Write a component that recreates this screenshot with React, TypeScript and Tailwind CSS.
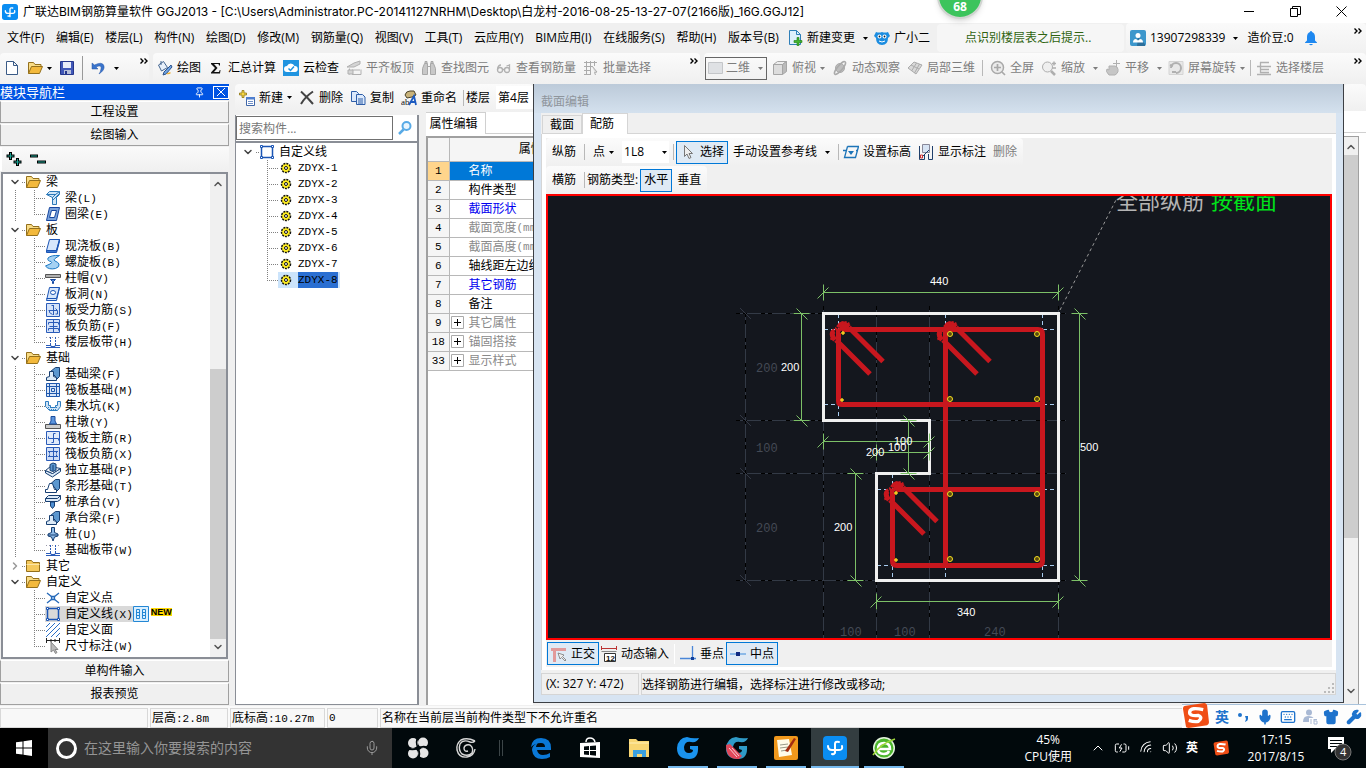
import React from 'react';

import { BatteryCharging, ChevronDown, ChevronRight, ChevronUp, Keyboard, Mic, Pin, Shirt, Volume2, Wifi, Wrench } from 'lucide-react';
import clsx from 'clsx';

const mono = "font-['Liberation_Mono','Noto_Sans_CJK_SC',monospace] text-[11px]";

type IconName =
  | 'beam' | 'ring' | 'slab' | 'spiral' | 'cap' | 'hole' | 'rebar' | 'negRebar' | 'strip'
  | 'wedge' | 'raft' | 'pit' | 'pier' | 'mainBar' | 'rebarX' | 'isolated' | 'stripBase' | 'pileCap'
  | 'pile' | 'point' | 'line' | 'hatch' | 'measure' | 'folder' | 'folderClosed' | 'gear'
  | 'page' | 'save' | 'undo' | 'paint' | 'sigma' | 'cloud' | 'align' | 'find' | 'glasses' | 'batch'
  | 'rect' | 'cube' | 'orbit' | 'part' | 'full' | 'zoomer' | 'pan' | 'rotate' | 'floors'
  | 'pageNew' | 'owl' | 'user' | 'bell' | 'add' | 'remove' | 'copy' | 'rename' | 'search'
  | 'cursor' | 'level' | 'labels' | 'ortho' | 'dynamic' | 'perp' | 'mid' | 'columns';

const icons: Record<IconName, React.ReactNode> = {
  beam: (
    <g fill="#cfe6f8" stroke="#2b78b8">
      <path d="M1.500 4.500l3-3h10v3l-3 3v7h-4v-7z" />
      <path d="M1.500 4.500h9l4-3M7 8l4-4M7 11l7-7" />
    </g>
  ),
  ring: (
    <g fill="#7aa3dc" stroke="#17469e">
      <path d="M4.500 1.500h10l-3 13h-10z" />
      <path d="M6.500 4.500h5l-2 7h-5z" fill="#fff" />
    </g>
  ),
  slab: (
    <g stroke="#1b54b4">
      <path d="M4.500 1.500h10l-3 11h-10z" fill="#d6e6fb" />
      <path d="M1.500 12.500v2h10l3-11v-2l-3 11z" fill="#3c78cf" />
    </g>
  ),
  spiral: <path d="M14.500 1.500Q6 1 3 4q-1 3 3 3.500 2 1-1 2.500l-4.500 2q3 4 10 2.500Q15 13 14 10q-1-2-4-3-2-1 0-2.500z" fill="#a5d2f3" stroke="#1b78c4" />,
  cap: (
    <g>
      <path d="M.5 4.500h15v3H.5z" fill="#b0b0b0" stroke="#555" />
      <path d="M5.500 9.500h5l-2 2v2h-1v-2z" fill="#4f8be0" stroke="#1748a0" />
    </g>
  ),
  hole: (
    <g stroke="#1b54b4">
      <path d="M4.500 1.500h10l-3 13h-10z" fill="#d6e6fb" />
      <path d="M1.500 12.500h10l3-11" fill="none" />
      <ellipse cx="8" cy="6.500" rx="2.500" ry="2" fill="#fff" />
    </g>
  ),
  rebar: (
    <g fill="none" stroke="#2b5cb8">
      <path d="M1.500 1.500h13v13h-13z" fill="#d5e3f9" />
      <path d="M8.500 3v10M6.500 3.500h2M3.500 8.500h9l-2-2M4.500 8.500v2l3 2M12.500 9v3h-2" />
    </g>
  ),
  negRebar: (
    <g fill="none" stroke="#2b5cb8">
      <path d="M1.500 1.500h13v13h-13z" fill="#d5e3f9" />
      <path d="M8.500 2v12M3.500 6.500v-2h10v2M4.500 8.500h8M3.500 12.500v-2h10v2" />
    </g>
  ),
  strip: (
    <g stroke="#2b5cb8" fill="none">
      <path d="M1 3.500h14" stroke="#99a" strokeDasharray="1 2" />
      <path d="M5.500 3v8M10.500 3v8" strokeDasharray="2 1" />
      <path d="M1 11.500h5v1h4v-1h5M1 13.500h14" />
    </g>
  ),
  wedge: (
    <g stroke="#173f72">
      <path d="M5.500 5.500l5-4h4v9l-4 4v-4z" fill="#5b97cf" />
      <path d="M1.500 14.500v-3l3-1v-5h4v5l3 1v3z" fill="#dceaf7" />
    </g>
  ),
  raft: (
    <g fill="none" stroke="#1f58ad">
      <path d="M1.500 1.500h13v13h-13z" fill="#d9e6f8" />
      <path d="M4.500 1v14M11.500 1v14M1 4.500h14M1 11.500h14M6.500 6.500h3v3h-3z" />
    </g>
  ),
  pit: (
    <g stroke="#2f7dc0">
      <path d="M.5 3.500h3v4h2v2h5v-2h2v-4h3v5l-3 4h-8l-4-4z" fill="#cfe3f5" />
      <path d="M3 9.500h10M4 11.500h8" strokeDasharray="1 1" />
    </g>
  ),
  pier: (
    <g>
      <path d="M.5 10.500h15v4H.5z" fill="#ccc" stroke="#555" />
      <path d="M4.500 10l1.500-3V2.500h4V7l1.500 3z" fill="#5c95dd" stroke="#1b4d9c" />
    </g>
  ),
  mainBar: (
    <g fill="none" stroke="#2b5cb8">
      <path d="M1.500 1.500h13v13h-13z" fill="#e2ecfb" />
      <path d="M10.500 3.500h-2v9h-2M3.500 6.500v2h10v2" />
    </g>
  ),
  rebarX: (
    <g fill="none" stroke="#2b5cb8">
      <path d="M1.500 1.500h13v13h-13z" fill="#cfdef7" />
      <path d="M8.500 2v12M3 5.500h10M4.500 5.500v2M11.500 5.500v2M3 10.500h10M4.500 8.500v2M11.500 8.500v2" />
    </g>
  ),
  isolated: (
    <g stroke="#173f72">
      <path d="M.5 8.500l7 3 8-5v3l-8 5.500-7-4z" fill="#d9e8f7" />
      <path d="M.5 8.500l5-4 10 2-8 5z" fill="#fff" />
      <path d="M5 2.500l3-1.500 3 1v6l-3 1.500-3-1z" fill="#5b97cf" />
      <path d="M8 3v6" />
    </g>
  ),
  stripBase: (
    <g stroke="#173f72">
      <path d="M6 5.500l4.500-4h4v9l-4 4v-4z" fill="#5b97cf" />
      <path d="M.5 14.500v-3h2l2-6h3l2 6h2v3z" fill="#fff" />
    </g>
  ),
  pileCap: (
    <g stroke="#173f72">
      <path d="M.5 4.500l3-3h12v4l-3 2H.5z" fill="#dceaf8" />
      <path d="M.5 4.500h12l3-3" fill="none" />
      <path d="M5.500 8h4v4l-2 2.500-2-2.500z" fill="#4e90d4" />
    </g>
  ),
  pile: (
    <g stroke="#173f72">
      <path d="M6.500 1.500h3v5l3.500 1.500v2l-3.500 1-1.500 4-1.500-4-3.500-1V8l3.500-1.500z" fill="#8db9e6" />
      <path d="M3 9h10" />
    </g>
  ),
  point: (
    <g stroke="#2468b8" strokeWidth="1.300" fill="none">
      <path d="M2 3l5 4M14 3L9 7M2 13l5-4M14 13L9 9" />
      <path d="M6.500 6.500h3v3h-3z" fill="#bcd8f4" />
    </g>
  ),
  line: (
    <g stroke="#1b55b5" fill="#fff">
      <path d="M2.500 2.500h11v11h-11z" fill="none" strokeWidth="1.500" />
      <path d="M1.500 1.500h2v2h-2zM12.500 1.500h2v2h-2zM1.500 12.500h2v2h-2zM12.500 12.500h2v2h-2z" />
    </g>
  ),
  hatch: <path d="M1 5l4-4M1 10l9-9M1 15L15 1M6 15l9-9M11 15l4-4" stroke="#2a6fc6" />,
  measure: (
    <g>
      <path d="M1.500 0v5M14.500 0v5M1.500 2.500h13M6 1v3M10 1v3" stroke="#222" fill="none" />
      <path d="M6 4v10l2.500-2 2 3.500 1.500-1-2-3h3z" fill="#bbb" stroke="#888" />
    </g>
  ),
  folder: (
    <g stroke="#94701c">
      <path d="M1.500 13.500v-11h5l1.500 2h6v3" fill="#f9dc86" />
      <path d="M1.500 13.500l3-7h11l-3 7z" fill="#f3b93c" />
    </g>
  ),
  folderClosed: (
    <g stroke="#94701c">
      <path d="M1.500 13.500v-11h5l1.500 2h6.500v9z" fill="#f5c95c" />
      <path d="M1.500 6.500h13" stroke="#fbe5a5" />
    </g>
  ),
  gear: (
    <g>
      <circle cx="8" cy="8" r="4.500" fill="#ffee22" stroke="#111" strokeWidth="1.500" strokeDasharray="2 1" />
      <circle cx="8" cy="8" r="1.500" fill="#fff" stroke="#111" />
    </g>
  ),
  page: <path d="M2.500 1.500h7l4 4v9h-11zM9.500 1.500v4h4" fill="#fff" stroke="#3a5a86" />,
  save: (
    <g>
      <path d="M1.500 1.500h13v13h-13z" fill="#4158b8" stroke="#26378c" />
      <path d="M4 2h8v6H4z" fill="#e8ecf8" />
      <path d="M5 10h7v4H5z" fill="#b9c1da" />
      <path d="M6 11h2v3H6z" fill="#26378c" />
    </g>
  ),
  undo: <path d="M2 3v6h6L6 7q6-3 5 2-.5 3-2 5 6-4 5-8-1.500-5-9.500-1z" fill="#3a74cc" stroke="#2757a6" strokeWidth=".5" />,
  paint: (
    <g>
      <path d="M1.500 5l5-3.500 4 6-6 3.500z" fill="#e8f0fa" stroke="#43648f" />
      <path d="M4 1v4" stroke="#43648f" />
      <path d="M14 5l-7 7-1 3 3-1 6-7z" fill="#6fa4e4" stroke="#2f548c" />
      <path d="M9 14q4-3 5-1-2 2-5 1z" fill="#f0b030" />
    </g>
  ),
  sigma: <path d="M3 3h9v2.500h-1L10.500 4H6l3.500 4L6 12h5l.8-2h.7L12 13.500H3v-1L7 8 3 4z" fill="#111" />,
  cloud: (
    <g>
      <path d="M0 0h16v16H0z" fill="#2094e0" />
      <path d="M4 12a3 3 0 0 1 0-6 4 4 0 0 1 7.500 0A3 3 0 0 1 12 12z" fill="#fff" />
      <path d="M5.500 8.500l2 2 3.500-4" fill="none" stroke="#2094e0" strokeWidth="1.500" />
    </g>
  ),
  align: (
    <g fill="#d4d4d4" stroke="#b0b0b0">
      <path d="M1 7l7-4 6-2v3l-6 3z" />
      <path d="M3.500 8.500v6M6 10h8M6 14.500h9v-5" fill="none" />
      <path d="M2 10h5v4H2z" />
    </g>
  ),
  find: (
    <g fill="#c8c8c8" stroke="#a8a8a8">
      <path d="M1.500 14.500v-6l2-5h3v11zM9.500 14.500v-11h3l2 5v6z" />
      <path d="M6.500 6.500h3M4 1.500h2v2H4zM10 1.500h2v2h-2z" />
    </g>
  ),
  glasses: (
    <g fill="none" stroke="#b0b0b0" strokeWidth="1.300">
      <circle cx="4" cy="10" r="2.500" />
      <circle cx="11" cy="10" r="2.500" />
      <path d="M6.500 9.500h2M1.500 9.500Q2 5 5 5M13.500 10V5l-3 1" />
    </g>
  ),
  batch: (
    <g stroke="#ababab" fill="none">
      <path d="M1 2.500h13M3.500 1v13M1 6.500h8M7.500 1v13M1 10.500h7M11.500 1v5M1 14.500h7" />
      <path d="M9 6l5 6-2.500.5 1 2.500" fill="#ddd" />
    </g>
  ),
  rect: <path d="M.5 2.500h14v11H.5z" fill="#dfe1e4" stroke="#c4c6c9" />,
  cube: (
    <g stroke="#a6a6a6">
      <path d="M1.500 4.500h9v10h-9z" fill="#ddd" />
      <path d="M1.500 4.500l4-3h9l-4 3z" fill="#eee" />
      <path d="M10.500 4.500l4-3v10l-4 3z" fill="#bbb" />
    </g>
  ),
  orbit: (
    <g stroke="#aaa">
      <circle cx="8" cy="8" r="4.500" fill="#bdbdbd" />
      <ellipse cx="8" cy="8" rx="8" ry="2.500" transform="rotate(-50 8 8)" fill="none" strokeWidth="1.500" />
    </g>
  ),
  part: (
    <g fill="#d8d8d8" stroke="#ababab">
      <path d="M1 8l6-6 8 3-6 9z" />
      <path d="M4 5l8 4M9.500 3l-5 8M12.500 4l-5 9" fill="none" />
    </g>
  ),
  full: (
    <g fill="none" stroke="#a8a8a8">
      <circle cx="7.500" cy="7.500" r="6" fill="#ebebeb" strokeWidth="1.500" />
      <path d="M4 7.500h7M7.500 4v7M12 12l3 3" strokeWidth="1.700" />
    </g>
  ),
  zoomer: (
    <g fill="none" stroke="#aeaeae">
      <circle cx="6.500" cy="7" r="5" fill="#efefef" />
      <path d="M10 11l4 4" strokeWidth="2.500" />
      <path d="M11 3.500h4M13 1.500v4M11 8h4" strokeWidth="1.500" />
    </g>
  ),
  pan: (
    <g fill="#c6c6c6" stroke="#b0b0b0">
      <path d="M4 15q-4-4-2-6l2 1V6h6l2 1q3 5-2 8z" />
      <path d="M8 3.500h7M11.500 0v7" />
    </g>
  ),
  rotate: (
    <g fill="none" stroke="#b0b0b0">
      <path d="M1 1.500h14v13H1z" fill="#e8e8e8" stroke="#d4d4d4" />
      <path d="M3 8a5 5 0 1 1 5 5" strokeWidth="2" />
      <path d="M4 12h4M2 5l3 1" strokeWidth="2" />
    </g>
  ),
  floors: <path d="M4 2.500h9M1 6.500h14M4 9.500h9M4 12.500h9M1 14.500h14M4.500 2v11" fill="none" stroke="#b0b0b0" strokeWidth="1.300" />,
  pageNew: (
    <g>
      <path d="M2.500.5h7l4 4v10h-11z" fill="#dff0fc" stroke="#2f7fb8" />
      <path d="M9.500.5v4h4" fill="none" stroke="#2f7fb8" />
      <path d="M10 7.500h2v3h3v2h-3v3h-2v-3H7v-2h3z" fill="#43b52e" stroke="#1d7a12" strokeWidth=".6" />
    </g>
  ),
  owl: (
    <g>
      <path d="M2 2q3 1 6 0 3 1 6 0l2 4-2 2q0 7-6 7T2 8L0 6z" fill="#1c8de0" />
      <circle cx="5.500" cy="6.500" r="2" fill="#fff" />
      <circle cx="10.500" cy="6.500" r="2" fill="#fff" />
      <circle cx="5.500" cy="6.500" r=".9" fill="#123" />
      <circle cx="10.500" cy="6.500" r=".9" fill="#123" />
      <path d="M5 11q3 2 6 0" stroke="#fff" fill="none" />
    </g>
  ),
  user: (
    <g>
      <rect width="16" height="16" rx="2" fill="#3d97cc" />
      <path d="M8 7l7 7v2H7z" fill="#2b6f9c" />
      <circle cx="8" cy="5.500" r="2.500" fill="#fff" />
      <path d="M3 12.500q0-3.500 3-3.500l2 1.500L10 9q3 0 3 3.500z" fill="#fff" />
    </g>
  ),
  bell: <path d="M8 1q1 0 1 1 3 1 3 5v3.500l2 2v.5H2v-.5l2-2V7q0-4 3-5 0-1 1-1zM6 14h4q-2 2.500-4 0z" fill="#1e88f0" />,
  add: (
    <g>
      <path d="M3 .5h2V3h2.500v2H5v2.500H3V5H.5V3H3z" fill="#f4d64a" stroke="#8d7310" strokeWidth=".8" />
      <path d="M7.500 7.500h8v8h-8z" fill="#fff" stroke="#3f66a8" />
      <path d="M7 7h9v2.500H7z" fill="#4f7fd0" />
      <path d="M9 11.500h5M9 13.500h5" stroke="#6f8fc8" />
    </g>
  ),
  remove: <path d="M2 1.500Q8 7 14 14M14 1.500Q6 7 2 14" fill="none" stroke="#444" strokeWidth="2" />,
  copy: (
    <g fill="#dce9fb" stroke="#2f5ea8">
      <path d="M1.500 1.500h5l2 2v8h-7z" />
      <path d="M6.500 4.500h6l2.500 2.500v7.500H6.500z" />
      <path d="M8 9h5M8 11h5M8 13h5" />
    </g>
  ),
  rename: (
    <g>
      <path d="M4 5q1-4 5-4h4l2 4-4 2-5 1z" fill="#c9b37a" stroke="#4b4229" />
      <text x="0" y="15" fontSize="9" fontFamily="Liberation Serif" fill="#111">ab</text>
      <path d="M8 15l5-9 2 9M10 12h5" fill="none" stroke="#1d5bc0" strokeWidth="1.800" />
    </g>
  ),
  search: (
    <g fill="none" stroke="#58aae6">
      <circle cx="9.500" cy="6" r="4" strokeWidth="2" fill="#eaf5fd" />
      <path d="M6.500 9.500L2 14" strokeWidth="2.500" />
    </g>
  ),
  cursor: <path d="M4.500 1.500v11l2.500-2.500 2 4.500 2-1-2-4h3.500z" fill="#eee" stroke="#777" />,
  level: (
    <g fill="none" stroke="#1c74b8" strokeWidth="1.300">
      <path d="M4.500 2.500h11l-3 11h-11l3-11M0 6.500h4M13 6.500h2" />
      <path d="M5 7h6l-3 4z" fill="#1c74b8" stroke="none" />
    </g>
  ),
  labels: (
    <g fill="none" stroke="#1f3f6b">
      <path d="M1.500 2v13.500h5V10M10.500 10v5.500h4V2" />
      <path d="M4.500.5h7v8h-7z" fill="#d7e4f4" stroke="#889" />
      <path d="M5 12l6-6" />
      <path d="M2.500 11h2v3h-2z" stroke="#c33" />
    </g>
  ),
  ortho: (
    <g>
      <path d="M0 2h15v3H5v11H2V5H0z" fill="#e29a9a" />
      <path d="M7 7l2 6 1.500-1.500L14 15l1-1-3.500-3.500L13 9z" fill="#eee" stroke="#777" strokeWidth=".8" />
    </g>
  ),
  dynamic: (
    <g>
      <path d="M.5 0v4M15.500 0v4M0 2.500h16" stroke="#b33" fill="none" />
      <path d="M3.500 7.500h11v8h-11z" fill="#fff" stroke="#333" />
      <text x="5" y="14.500" fontSize="8" fontWeight="bold" fontFamily="Liberation Sans" fill="#111">12</text>
      <path d="M.5 5.500h15" stroke="#888" />
    </g>
  ),
  perp: (
    <g>
      <path d="M12.500 0v12M0 12.500h16" stroke="#4a86d8" strokeWidth="1.300" />
      <path d="M11 11h3v3h-3z" fill="#123f9a" />
    </g>
  ),
  mid: (
    <g>
      <path d="M0 8h16" stroke="#5f9fe0" strokeWidth="1.300" />
      <path d="M6 6h4v4H6z" fill="#102a80" />
    </g>
  ),
  columns: <path d="M.5.5h15v15H.5zM3.500 3.500h3v9h-3zM9.500 3.500h3v9h-3zM3.500 6.500h3M3.500 9.500h3M9.500 6.500h3M9.500 9.500h3" fill="#d9efff" stroke="#2487d4" />,
};

const Icon: React.FC<{ name: IconName; className?: string }> = ({ name, className }) => (
  <svg viewBox="0 0 16 16" fill="none" className={clsx('size-4 shrink-0', className)} aria-hidden="true">
    {icons[name]}
  </svg>
);

const Caret: React.FC<{ className?: string }> = ({ className }) => (
  <svg viewBox="0 0 5 3" className={clsx('h-[3px] w-[5px] shrink-0', className)} aria-hidden="true">
    <path d="M0 0h5L2.500 3z" fill="currentColor" />
  </svg>
);

const Divider: React.FC = () => <span className="h-4 w-px shrink-0 bg-[#b8b8b8]" />;

interface ToolProps {
  icon?: IconName;
  label?: string;
  caret?: boolean;
  tight?: boolean;
  disabled?: boolean;
  active?: boolean;
  title?: string;
}

const Tool: React.FC<ToolProps> = ({ icon, label, caret, tight, disabled, active, title }) => (
  <button
    type="button"
    disabled={disabled}
    title={title}
    aria-label={label ?? title}
    className={clsx(
      'flex shrink-0 items-center gap-1 whitespace-nowrap',
      disabled && 'text-[#7d7d7d]',
      active && 'h-[23px] border border-[#0078d7] bg-[#dfeaf5] px-[3px]',
    )}
  >
    {icon && <Icon name={icon} />}
    {label}
    {caret && <Caret className={tight ? '' : 'ml-1'} />}
  </button>
);

const More: React.FC<{ className?: string }> = ({ className }) => (
  <button type="button" aria-label="更多" className={clsx('shrink-0 self-start pt-[5px]', className)}>
    <svg viewBox="0 0 8 6" className="h-[6px] w-2">
      <path d="M.5.5L3 3 .5 5.500M4.500.5L7 3 4.500 5.500" fill="none" stroke="#000" strokeWidth="1.400" />
    </svg>
  </button>
);

const AppLogo: React.FC<{ className?: string }> = ({ className }) => (
  <svg viewBox="0 0 24 24" className={className} aria-hidden="true">
    <rect width="24" height="24" rx="4" fill="#0a8df2" />
    <path d="M12 19V8q0-3 4-2M5 10q0 4 4 4h7q4 0 3-4M9 18q3 1 3-3" fill="none" stroke="#fff" strokeWidth="2" strokeLinecap="round" />
  </svg>
);

const TitleBar: React.FC = () => (
  <header className="flex h-[23px] shrink-0 items-center bg-white pl-[2px]">
    <AppLogo className="mr-[5px] size-4" />
    <h1 className="flex-1 font-['Inter','Noto_Sans_CJK_SC',sans-serif] whitespace-nowrap">
      广联达BIM钢筋算量软件 GGJ2013 - [C:\Users\Administrator.PC-20141127NRHM\Desktop\白龙村-2016-08-25-13-27-07(2166版)_16G.GGJ12]
    </h1>
    <div className="flex gap-[35px] pr-[19px]">
      <button type="button" aria-label="最小化">
        <svg viewBox="0 0 11 11" className="size-[11px]"><path d="M0 5.500h10" stroke="#000" /></svg>
      </button>
      <button type="button" aria-label="还原">
        <svg viewBox="0 0 11 11" className="size-[11px]"><path d="M.5 2.500h7v8h-7zM2.500 2.500v-2h8v8h-2.500" fill="none" stroke="#000" /></svg>
      </button>
      <button type="button" aria-label="关闭">
        <svg viewBox="0 0 11 11" className="size-[11px]"><path d="M.5.5l10 10M10.500.5l-10 10" stroke="#000" /></svg>
      </button>
    </div>
  </header>
);

const menus = ['文件(F)', '编辑(E)', '楼层(L)', '构件(N)', '绘图(D)', '修改(M)', '钢筋量(Q)', '视图(V)', '工具(T)', '云应用(Y)', 'BIM应用(I)', '在线服务(S)', '帮助(H)', '版本号(B)'];

const MenuBar: React.FC = () => (
  <nav className="flex h-[30px] shrink-0 items-center pl-[7px]">
    <div className="mr-2 flex w-[772px] shrink-0 items-center justify-between">
      {menus.map((m) => (
        <button key={m} type="button" className="whitespace-nowrap">{m}</button>
      ))}
    </div>
    <div className="flex w-[150px] shrink-0 items-center gap-[6px]">
      <Tool icon="pageNew" label="新建变更" caret />
      <Tool icon="owl" label="广小二" />
    </div>
    <a href="#tip" className="flex h-7 w-[187px] shrink-0 items-center rounded bg-[#f6f6f6] pl-7 text-[#2f6410]">点识别楼层表之后提示..</a>
    <div className="ml-[2px] flex h-full flex-1 items-center gap-[9px] rounded bg-linear-to-b from-[#fafafa] to-[#f1f1f1] pl-1">
      <Tool icon="user" label="13907298339" caret />
      <span>造价豆:0</span>
      <Tool icon="bell" title="消息" />
      <More className="mr-1 ml-auto" />
    </div>
  </nav>
);

const bar = 'flex items-center rounded bg-linear-to-b from-[#fbfbfb] to-[#f0f0f0]';

const MainToolbar: React.FC = () => (
  <div className="flex h-[31px] shrink-0 gap-1 pb-px">
    <div className={clsx(bar, 'w-[149px] shrink-0 gap-[7px] pl-1')}>
      <Tool icon="page" title="新建" />
      <Tool icon="folder" caret tight title="打开" />
      <Tool icon="save" title="保存" />
      <span className="h-6 w-px bg-[#999]" />
      <Tool icon="undo" caret title="撤销" />
      <More className="mr-px ml-auto" />
    </div>
    <div className={clsx(bar, 'w-[547px] shrink-0 gap-[7px] pl-1')}>
      <Tool icon="paint" label="绘图" />
      <Tool icon="sigma" label="汇总计算" />
      <Tool icon="cloud" label="云检查" />
      <Tool icon="align" label="平齐板顶" disabled />
      <Tool icon="find" label="查找图元" disabled />
      <Tool icon="glasses" label="查看钢筋量" disabled />
      <Tool icon="batch" label="批量选择" disabled />
      <More className="mr-[2px] ml-auto" />
    </div>
    <div className={clsx(bar, 'flex-1 gap-[7px] pl-px')}>
      <label className="-mr-[2px] flex h-[23px] w-[62px] shrink-0 items-center border border-[#666] pl-[2px] text-[#7d7d7d]">
        <Icon name="rect" className="mr-[2px]" />
        <select aria-label="视图模式" className="w-8 appearance-none outline-none">
          <option>二维</option>
        </select>
        <Caret />
      </label>
      <Tool icon="cube" label="俯视" caret tight disabled />
      <Tool icon="orbit" label="动态观察" disabled />
      <Tool icon="part" label="局部三维" disabled />
      <Divider />
      <Tool icon="full" label="全屏" disabled />
      <Tool icon="zoomer" label="缩放" caret disabled />
      <Tool icon="pan" label="平移" caret disabled />
      <div className="-ml-px flex items-center gap-[5px]">
        <Tool icon="rotate" label="屏幕旋转" caret tight disabled />
        <Divider />
        <Tool icon="floors" label="选择楼层" disabled />
      </div>
      <More className="mr-1 ml-auto" />
    </div>
  </div>
);

interface TreeItem {
  label: string;
  hotkey?: string;
  icon: IconName;
}

interface TreeGroup {
  label: string;
  open: boolean;
  items: TreeItem[];
}

const groups: TreeGroup[] = [
  { label: '梁', open: true, items: [{ label: '梁', hotkey: '(L)', icon: 'beam' }, { label: '圈梁', hotkey: '(E)', icon: 'ring' }] },
  {
    label: '板',
    open: true,
    items: [
      { label: '现浇板', hotkey: '(B)', icon: 'slab' },
      { label: '螺旋板', hotkey: '(B)', icon: 'spiral' },
      { label: '柱帽', hotkey: '(V)', icon: 'cap' },
      { label: '板洞', hotkey: '(N)', icon: 'hole' },
      { label: '板受力筋', hotkey: '(S)', icon: 'rebar' },
      { label: '板负筋', hotkey: '(F)', icon: 'negRebar' },
      { label: '楼层板带', hotkey: '(H)', icon: 'strip' },
    ],
  },
  {
    label: '基础',
    open: true,
    items: [
      { label: '基础梁', hotkey: '(F)', icon: 'wedge' },
      { label: '筏板基础', hotkey: '(M)', icon: 'raft' },
      { label: '集水坑', hotkey: '(K)', icon: 'pit' },
      { label: '柱墩', hotkey: '(Y)', icon: 'pier' },
      { label: '筏板主筋', hotkey: '(R)', icon: 'mainBar' },
      { label: '筏板负筋', hotkey: '(X)', icon: 'rebarX' },
      { label: '独立基础', hotkey: '(P)', icon: 'isolated' },
      { label: '条形基础', hotkey: '(T)', icon: 'stripBase' },
      { label: '桩承台', hotkey: '(V)', icon: 'pileCap' },
      { label: '承台梁', hotkey: '(F)', icon: 'wedge' },
      { label: '桩', hotkey: '(U)', icon: 'pile' },
      { label: '基础板带', hotkey: '(W)', icon: 'strip' },
    ],
  },
  { label: '其它', open: false, items: [] },
  {
    label: '自定义',
    open: true,
    items: [
      { label: '自定义点', icon: 'point' },
      { label: '自定义线', hotkey: '(X)', icon: 'line' },
      { label: '自定义面', icon: 'hatch' },
      { label: '尺寸标注', hotkey: '(W)', icon: 'measure' },
    ],
  },
];

const SectionButton: React.FC<{ label: string }> = ({ label }) => (
  <button type="button" className="h-[22px] w-full shrink-0 border border-[#a0a0a0] border-t-white bg-[#f0f0f0] text-center leading-5">
    {label}
  </button>
);

const Guides: React.FC<{ outer?: boolean; last: boolean }> = ({ outer, last }) => (
  <svg viewBox="0 0 42 16" className="h-4 w-[42px] shrink-0" aria-hidden="true">
    <g stroke="#808080" strokeDasharray="1 1" fill="none">
      {outer && <path d="M12.500 0v16" />}
      <path d={last ? 'M31.500 0v8' : 'M31.500 0v16'} />
      <path d="M31 8.500h11" />
    </g>
  </svg>
);

const Navigator: React.FC = () => (
  <aside className="flex w-[229px] shrink-0 flex-col gap-px pb-px">
    <div className="flex h-4 shrink-0 items-center bg-[#0054e3] text-[13px] leading-4 text-white">
      <h2 className="flex-1">模块导航栏</h2>
      <Pin className="mr-2 size-[11px]" />
      <button type="button" aria-label="关闭导航栏" className="flex h-[13px] w-4 items-center justify-center border border-white">
        <svg viewBox="0 0 8 8" className="size-2"><path d="M0 0l8 8M8 0L0 8" stroke="#fff" /></svg>
      </button>
    </div>
    <SectionButton label="工程设置" />
    <SectionButton label="绘图输入" />
    <div className="flex h-6 shrink-0 items-center gap-2 border-l-2 border-white bg-linear-to-b from-[#fafafa] to-[#f0f0f0] pl-1">
      <button type="button" aria-label="全部展开">
        <svg viewBox="0 0 16 16" className="size-4">
          <path d="M4.500 1v8M.5 5h8M11.500 7v8M7.500 11h8" stroke="#000" strokeWidth="3" />
          <path d="M4.500 2v6M1.500 5h6M11.500 8v6M8.500 11h6" stroke="#1da595" />
        </svg>
      </button>
      <button type="button" aria-label="全部折叠">
        <svg viewBox="0 0 16 16" className="size-4">
          <path d="M0 5h8M7 11h9" stroke="#000" strokeWidth="3" />
          <path d="M1 5h6M8 11h7" stroke="#1da595" />
        </svg>
      </button>
    </div>
    <div className="mx-px flex min-h-0 flex-1 border-2 border-[#8a8e96] bg-white">
      <ul className="min-w-0 flex-1 overflow-hidden">
        {groups.map((group, gi) => (
          <li key={group.label}>
            <div className="flex h-4 items-center pl-[6px]">
              {group.open ? <ChevronDown className="size-3" strokeWidth={3} color="#444" /> : <ChevronRight className="size-3" strokeWidth={3} color="#999" />}
              <span className="ml-px w-[3px] border-t border-dotted border-[#808080]" />
              <Icon name={group.open ? 'folder' : 'folderClosed'} className="mr-[5px]" />
              {group.label}
            </div>
            <ul>
              {group.items.map((item, i) => (
                <li key={item.label} className="flex h-4 items-center">
                  <Guides outer={gi < 3} last={i === group.items.length - 1} />
                  <span className={clsx('flex h-4 items-center gap-1 whitespace-nowrap', item.label === '自定义线' && 'bg-[#d9d9d9]')}>
                    <Icon name={item.icon} />
                    <span>
                      {item.label}
                      <span className={mono}>{item.hotkey}</span>
                    </span>
                  </span>
                  {item.label === '自定义线' && (
                    <>
                      <Icon name="columns" />
                      <span className="mb-1 ml-[2px] bg-[#ffd800] font-['Liberation_Sans',sans-serif] text-[9px] leading-[8px] font-bold">NEW</span>
                    </>
                  )}
                </li>
              ))}
            </ul>
          </li>
        ))}
      </ul>
      <div className="flex w-4 shrink-0 flex-col items-center bg-[#f0f0f0] py-1">
        <ChevronUp className="size-3" strokeWidth={3} color="#555" />
        <span className="mt-auto h-[270px] w-full bg-[#cdcdcd]" />
        <ChevronDown className="mt-[2px] size-3" strokeWidth={3} color="#555" />
      </div>
    </div>
    <SectionButton label="单构件输入" />
    <SectionButton label="报表预览" />
  </aside>
);

const members = ['ZDYX-1', 'ZDYX-2', 'ZDYX-3', 'ZDYX-4', 'ZDYX-5', 'ZDYX-6', 'ZDYX-7', 'ZDYX-8'];

const MemberList: React.FC = () => (
  <section className="flex w-[184px] shrink-0 flex-col border-r-2 border-b border-l border-[#8a8e96] bg-white">
    <div className="flex h-7 shrink-0 items-center border-b-2 border-[#8a8e96]">
      <input type="text" aria-label="搜索构件" placeholder="搜索构件..." className="h-6 w-[157px] border border-[#707070] px-[2px] placeholder:text-[#777]" />
      <button type="button" aria-label="搜索" className="ml-1"><Icon name="search" /></button>
    </div>
    <ul className="pt-px">
      <li className="flex h-4 items-center pl-[6px]">
        <ChevronDown className="size-3" strokeWidth={3} color="#444" />
        <span className="ml-[2px] w-[3px] border-t border-dotted border-[#808080]" />
        <Icon name="line" className="mr-1" />
        自定义线
      </li>
      {members.map((m, i) => {
        const selected = i === members.length - 1;
        return (
          <li key={m} className="flex h-4 items-center">
            <Guides last={selected} />
            <span className={clsx('flex h-4 items-center pr-[2px]', selected && 'bg-[#cce4fb]')}>
              <Icon name="gear" className="mr-1" />
              <span className={clsx(mono, 'h-4 leading-4', selected && 'bg-[#2a6fd2]')}>{m}</span>
            </span>
          </li>
        );
      })}
    </ul>
  </section>
);

const properties = [
  { no: 1, name: '名称', tone: 'bg-[#0078d7] text-white' },
  { no: 2, name: '构件类型', tone: 'text-black' },
  { no: 3, name: '截面形状', tone: 'text-[#0000f0]' },
  { no: 4, name: '截面宽度', unit: '(mm)', tone: 'text-[#8a8a8a]' },
  { no: 5, name: '截面高度', unit: '(mm)', tone: 'text-[#8a8a8a]' },
  { no: 6, name: '轴线距左边线', tone: 'text-black' },
  { no: 7, name: '其它钢筋', tone: 'text-[#0000f0]' },
  { no: 8, name: '备注', tone: 'text-black' },
  { no: 9, name: '其它属性', tone: 'text-[#8a8a8a]', group: true },
  { no: 18, name: '锚固搭接', tone: 'text-[#8a8a8a]', group: true },
  { no: 33, name: '显示样式', tone: 'text-[#8a8a8a]', group: true },
];

const PropertyPanel: React.FC = () => (
  <section className="-mt-[3px] flex min-w-0 flex-1 flex-col overflow-hidden">
    <div className="flex h-[22px] shrink-0">
      <button type="button" className="w-[60px] border-t border-r border-[#d0d0d0] bg-white pr-1">属性编辑</button>
      <span className="flex-1 border-b border-[#d0d0d0] bg-white" />
    </div>
    <div className="flex-1 overflow-hidden bg-white pt-[2px]">
      <div className="h-full border-t-2 border-l-2 border-[#a0a0a0]">
        <table className="w-[208px] table-fixed border-collapse">
          <thead>
            <tr className="h-[23px] bg-[#f5f5f5]">
              <th aria-label="序号" className="w-[21px] border-r border-b border-[#b8b8b8]" />
              <th className="border-b border-[#b8b8b8] p-0 font-normal">属性名称</th>
            </tr>
          </thead>
          <tbody>
            {properties.map((p) => (
              <tr key={p.no} className="h-[19px]">
                <td className={clsx(mono, 'border-r border-b border-[#b8b8b8] p-0 text-center leading-[18px]', p.no === 1 ? 'bg-[#ffd58c]' : 'bg-[#f5f5f5]')}>{p.no}</td>
                <td className={clsx('border-b border-[#b8b8b8] p-0 leading-[18px] whitespace-nowrap', p.tone)}>
                  <span className="flex items-center">
                    <span className="flex w-[19px] shrink-0 justify-center">
                      {p.group && (
                        <svg viewBox="0 0 13 13" className="mr-[3px] size-[13px]"><path d="M.5.5h12v12H.5z" fill="#fff" stroke="#aaa" /><path d="M3 6.500h7M6.500 3v7" stroke="#000" /></svg>
                      )}
                    </span>
                    {p.name}
                    <span className={mono}>{p.unit}</span>
                  </span>
                </td>
              </tr>
            ))}
          </tbody>
        </table>
      </div>
    </div>
  </section>
);

const MemberArea: React.FC = () => (
  <div className="flex w-[298px] shrink-0 flex-col">
    <div className={clsx(bar, 'h-[27px] shrink-0 gap-[7px] overflow-hidden pl-1')}>
      <Tool icon="add" label="新建" caret tight />
      <Tool icon="remove" label="删除" />
      <Tool icon="copy" label="复制" />
      <Tool icon="rename" label="重命名" />
      <div className="-ml-px flex min-w-0 flex-1 items-center gap-[2px]">
        <Divider />
        <label htmlFor="floor" className="shrink-0 whitespace-nowrap">楼层</label>
        <select id="floor" className="ml-1 h-[23px] min-w-0 flex-1 appearance-none bg-white px-[2px]">
          <option>第4层</option>
        </select>
      </div>
    </div>
    <div className="mt-1 flex min-h-0 flex-1 gap-[7px] pb-px">
      <MemberList />
      <PropertyPanel />
    </div>
  </div>
);

const Dim: React.FC<{ x1: number; y1: number; x2: number; y2: number }> = ({ x1, y1, x2, y2 }) => {
  const flat = y1 === y2;
  const tick = (x: number, y: number) =>
    flat ? `M${x} ${y - 8}v16M${x - 6} ${y + 6}l11-11` : `M${x - 8} ${y}h16M${x - 5} ${y - 5}l11 11`;
  return <path d={`M${x1} ${y1}L${x2} ${y2}${tick(x1, y1)}${tick(x2, y2)}`} stroke="#7cc067" fill="none" />;
};

const hooks = [[0, 0], [107, 0], [54, 160]];
const rings = [[950, 334], [1037, 334], [950, 399], [1037, 399], [950, 494], [1037, 494], [950, 559], [1037, 559]];
const dots = [[843, 333], [842, 400], [896, 493], [896, 560]];

const labels: [string, number, number][] = [
  ['440', 930, 285], ['200', 781, 371], ['500', 1080, 451], ['200', 834, 531], ['340', 957, 616],
  ['100', 894, 445], ['100', 888, 451], ['200', 866, 456],
];

const axisLabels: [string, number, number][] = [
  ['200', 756, 372], ['100', 756, 452], ['200', 756, 532], ['100', 840, 636], ['100', 894, 636], ['240', 984, 636],
];

const axes = 'M823.500 306V638M876.500 306V638M929.500 306V638M745.500 313V581M1058.500 306V638M736 313.500H1066M736 420.500H1066M736 473.500H1066M736 580.500H1066';

const SectionDrawing: React.FC = () => (
  <svg width="782" height="442" viewBox="548 196 782 442" className="block" role="img" aria-label="截面配筋图">
    <path d={axes} stroke="#333a46" fill="none" />
    <path d={axes} stroke="#000" strokeDasharray="4 3 4 14" fill="none" />
    <path d="M740 308l11 11M740 415l11 11M740 468l11 11M740 575l11 11" stroke="#333844" />
    <g fill="#444a55" fontSize="12" fontFamily="Liberation Mono">
      {axisLabels.map(([t, x, y]) => <text key={`${x}-${y}`} x={x} y={y}>{t}</text>)}
    </g>
    <path d="M1060 310l57-112" stroke="#999" strokeDasharray="3 3" />
    <g fontSize="22" fontFamily="Noto Sans CJK SC">
      <text x="1116" y="209" fill="#b4b4b4">全部纵筋</text>
      <text x="1211" y="209" fill="#00e21a">按截面</text>
    </g>
    <path
      d="M824 329.500h14M1043 329.500h15M824 404.500h14M1043 404.500h15M877 489.500h15M1043 489.500h15M877 565.500h15M1043 565.500h15M838.500 314v15M838.500 405v15M945.500 314v15M945.500 566v14M1042.500 314v15M1042.500 566v14M892.500 474v15M892.500 566v14"
      stroke="#a8ccf0"
      strokeDasharray="4 3"
    />
    <path d="M823.500 313.500H1058.500V580.500H876.500V473.500H929.500V420.500H823.500Z" fill="none" stroke="#f0f0f0" strokeWidth="3" />
    <g fill="none" stroke="#c8171e" strokeWidth="5">
      <path d="M838.500 333V401Q838.500 404.500 842 404.500H1042M842 329.500H1038Q1042.500 329.500 1042.500 334V561Q1042.500 565.500 1038 565.500H897Q892.500 565.500 892.500 561V493M896 489.500H1042M945.500 330V565" />
      {hooks.map(([dx, dy]) => (
        <g key={dx} transform={`translate(${dx} ${dy})`}>
          <path d="M870 374L836 340M849 327.500L883 361.500" />
          <path d="M835 340Q830 334 834 331M849 327Q842 321 839 327" />
          <path d="M832 340Q830 331 836 329L839 325Q844 320 850 325" strokeWidth="3" strokeDasharray="2 1" />
          <path d="M838 336v-5l4-3h4" strokeWidth="4" />
        </g>
      ))}
    </g>
    <Dim x1={823.5} y1={292.5} x2={1058.5} y2={292.5} />
    <Dim x1={823.5} y1={441.5} x2={929.5} y2={441.5} />
    <Dim x1={876.5} y1={452.5} x2={929.5} y2={452.5} />
    <Dim x1={876.5} y1={601.5} x2={1058.5} y2={601.5} />
    <Dim x1={801.5} y1={313.5} x2={801.5} y2={420.5} />
    <Dim x1={855.5} y1={473.5} x2={855.5} y2={580.5} />
    <Dim x1={908.5} y1={420.5} x2={908.5} y2={473.5} />
    <Dim x1={1079.5} y1={313.5} x2={1079.5} y2={580.5} />
    <g stroke="#f5e020">
      {rings.map(([x, y]) => <circle key={`${x}-${y}`} cx={x} cy={y} r="2.500" fill="#5a4a10" />)}
      {dots.map(([x, y]) => <circle key={`${x}-${y}`} cx={x} cy={y} r="1.300" fill="#f5a020" />)}
    </g>
    <g fill="#fff" fontSize="11" fontFamily="Liberation Sans">
      {labels.map(([t, x, y]) => <text key={`${x}-${y}`} x={x} y={y}>{t}</text>)}
    </g>
  </svg>
);

const SectionEditor: React.FC = () => (
  <section className="mb-[3px] flex min-w-0 flex-1 flex-col border-r border-b border-l border-[#3c3f44] bg-[#d7e4f2] px-[7px] pb-[7px]">
    <div className="-mx-[7px] flex h-[29px] shrink-0 items-center bg-linear-to-b from-[#bccad9] to-[#d4e1ee] pt-[6px] pl-[7px]">
      <h2 className="text-[#8f959c]">截面编辑</h2>
    </div>
    <div className="flex min-h-0 flex-1 flex-col bg-[#f0f0f0]">
      <div className="flex h-[21px] shrink-0 items-end" role="tablist">
        <button type="button" role="tab" aria-selected="false" className="ml-px h-[19px] w-10 border border-[#d5d5d5] leading-4">截面</button>
        <button type="button" role="tab" aria-selected="true" className="h-[21px] w-[46px] border border-b-0 border-[#d5d5d5] bg-white pr-[6px]">配筋</button>
        <span className="h-px flex-1 bg-[#d5d5d5]" />
      </div>
      <div className="flex min-h-0 flex-1 flex-col border-l border-[#d5d5d5] bg-white pt-1 pr-1 pb-[3px] pl-1">
        <div className="flex min-h-0 flex-1 flex-col bg-[#f0f0f0]">
          <div className={clsx(bar, 'h-7 shrink-0 gap-2 self-start pr-[6px] pl-[6px]')}>
            <span>纵筋</span>
            <Divider />
            <Tool label="点" caret tight />
            <label className="-mr-1 flex h-[22px] w-[47px] items-center bg-white px-[2px]">
              <select aria-label="钢筋信息" className="w-[38px] appearance-none outline-none">
                <option>1L8</option>
              </select>
              <Caret />
            </label>
            <Divider />
            <div className="-ml-[6px] flex items-center gap-[5px]">
              <Tool icon="cursor" label="选择" active />
              <Tool label="手动设置参考线" caret />
            </div>
            <Divider />
            <div className="-ml-1 flex items-center gap-[7px]">
              <Tool icon="level" label="设置标高" />
              <Tool icon="labels" label="显示标注" />
              <Tool label="删除" disabled />
            </div>
          </div>
          <div className={clsx(bar, 'h-7 shrink-0 gap-[2px] self-start pr-[6px] pl-[6px]')}>
            <span className="mr-[6px]">横筋</span>
            <Divider />
            <span>钢筋类型:</span>
            <Tool label="水平" active />
            <span className="ml-[3px]"><Tool label="垂直" /></span>
          </div>
          <div className="min-h-0 flex-1 overflow-hidden border-2 border-[#f00] bg-[#14171e]">
            <SectionDrawing />
          </div>
          <div className="flex h-[27px] shrink-0 items-center gap-[2px] pl-px">
            <Tool icon="ortho" label="正交" active />
            <Tool icon="dynamic" label="动态输入" />
            <span className="ml-[3px] h-5 w-px bg-white" />
            <span className="ml-[3px]"><Tool icon="perp" label="垂点" /></span>
            <Tool icon="mid" label="中点" active />
          </div>
        </div>
      </div>
      <div className="flex h-[25px] shrink-0 gap-[2px] pt-[3px]">
        <span className="w-[98px] border border-[#d5d5d5] pl-1 leading-[19px]">(X: 327 Y: 472)</span>
        <span className="flex flex-1 items-end justify-between border border-[#d5d5d5] leading-[19px]">
          选择钢筋进行编辑，选择标注进行修改或移动;
          <svg viewBox="0 0 12 12" className="size-3"><path d="M9 2h2M9 6h2M5 6h2M9 10h2M5 10h2M1 10h2" stroke="#bbb" strokeWidth="2" /></svg>
        </span>
      </div>
    </div>
  </section>
);

const RightEdge: React.FC = () => (
  <div className="flex w-[22px] shrink-0 flex-col">
    <div className={clsx(bar, 'h-[27px] shrink-0')} />
    <div className="h-[22px] shrink-0 border-b border-[#d0d0d0] bg-white" />
    <div className="flex min-h-0 flex-1 bg-white pt-[3px]">
      <div className="flex w-[15px] flex-col items-center border-t border-r border-b border-[#a0a0a0] bg-[#f0f0f0] pt-1 pb-2">
        <ChevronUp className="size-3 shrink-0" strokeWidth={3} color="#555" />
        <div className="w-full flex-1">
          <div className="mt-[2px] h-[72%] bg-[#cdcdcd]" />
        </div>
        <ChevronDown className="size-3 shrink-0" strokeWidth={3} color="#555" />
      </div>
    </div>
  </div>
);

const Sogou: React.FC<{ className?: string }> = ({ className }) => (
  <svg viewBox="0 0 28 28" className={className} aria-hidden="true">
    <path d="M4 4l19-3q2 0 3 2l2 18q0 2-2 3L7 27q-3 0-3-2L1 7q0-3 3-3z" fill="#f04e16" />
    <path d="M22 8Q9 5 8 10t9 4q5 2 0 6-4 1-10-1" fill="none" stroke="#fff" strokeWidth="3.500" />
  </svg>
);

const cell = 'border border-[#d8d8d8] bg-[#f8f8f8] pl-px leading-[18px] whitespace-nowrap';

const StatusBar: React.FC = () => (
  <footer className="relative flex h-[22px] shrink-0 gap-[2px] bg-[#fafafa] pt-[2px]">
    <span className={clsx(cell, 'w-[148px]')} />
    <span className={clsx(cell, 'w-[78px]')}>层高<span className={mono}>:2.8m</span></span>
    <span className={clsx(cell, 'w-[95px]')}>底标高<span className={mono}>:10.27m</span></span>
    <span className={clsx(cell, mono, 'w-[51px]')}>0</span>
    <span className={clsx(cell, 'flex-1')}>名称在当前层当前构件类型下不允许重名</span>
    <div className="absolute right-0 bottom-0 flex h-6 w-[184px] items-center gap-[7px] border-t border-[#a9c3dc] bg-[#fdfdfd] text-[#1f73cc]">
      <Sogou className="-mt-[2px] size-[27px] shrink-0" />
      <b className="-ml-px text-[14px]">英</b>
      <svg viewBox="0 0 14 14" className="size-[14px]"><circle cx="4" cy="5" r="2" fill="currentColor" /><path d="M9 6h3v3q0 2-3 3l1-3z" fill="currentColor" /></svg>
      <Mic className="size-4" strokeWidth={2.5} fill="#1f73cc" />
      <Keyboard className="size-4" />
      <svg viewBox="0 0 16 16" className="size-4"><circle cx="6" cy="3.500" r="3" fill="#a9b9d4" /><path d="M0 13q0-6 5-6t6 3v3z" fill="#a9b9d4" /><path d="M6 9h10v6H6z" fill="#fff" /><path d="M8 10v5M11 10v5h3v-3h-3M11 10.500h3" stroke="#a9b9d4" fill="none" /></svg>
      <Shirt className="-ml-[3px] size-4" fill="#1f73cc" />
      <Wrench className="size-4" fill="#1f73cc" />
    </div>
  </footer>
);

interface TaskProps {
  title: string;
  running?: boolean;
  active?: boolean;
  children: React.ReactNode;
}

const Task: React.FC<TaskProps> = ({ title, running, active, children }) => (
  <button type="button" aria-label={title} className={clsx('flex h-10 w-12 shrink-0 flex-col items-center', active && 'bg-[#333d40]')}>
    <svg viewBox="0 0 24 24" className="mt-2 size-6">{children}</svg>
    {running && <span className={clsx('mt-auto h-[2px] bg-[#76b9ed]', active ? 'w-12' : 'w-10')} />}
  </button>
);

const Taskbar: React.FC = () => (
  <div className="flex h-10 shrink-0 items-center bg-[#01090c] text-white">
    <button type="button" aria-label="开始" className="flex h-10 w-12 shrink-0 items-center justify-center bg-black">
      <svg viewBox="0 0 16 16" className="size-4"><path d="M0 2.300L6.500 1.400v6H0zM7.500 1.300L16 0v7.400H7.500zM0 8.400h6.500v6.200L0 13.700zM7.500 8.400H16V16l-8.500-1.200z" fill="#fff" /></svg>
    </button>
    <label className="flex h-10 w-[344px] shrink-0 items-center bg-[#333] pr-3 pl-2">
      <span className="mr-[7px] size-[21px] shrink-0 rounded-full border-[3px] border-white" />
      <input type="text" aria-label="搜索" placeholder="在这里输入你要搜索的内容" className="min-w-0 flex-1 text-[14px] outline-none placeholder:text-[#959595]" />
      <Mic className="size-4 text-[#999]" strokeWidth={1.5} />
    </label>
    <div className="ml-[2px] flex shrink-0">
      <Task title="浏览器">
        <g fill="#e6e6e6"><circle cx="7" cy="7" r="5" /><circle cx="17" cy="6.500" r="5" /><circle cx="17.500" cy="17" r="5" /><circle cx="7" cy="17.500" r="5" /></g>
        <path d="M12 1q-3 5 0 11 3 6 0 11M1 12q5 3 11 0t11 0" fill="none" stroke="#01090c" strokeWidth="1.500" />
      </Task>
      <Task title="桌面">
        <path d="M21 5q-2 2-5 1Q9 3 6 8q-2 6 2 10 6 3 10-1 2-5-2-8-5-1-6 3 0 4 4 3M21 5Q13 1 7 4q-5 4-4 10 2 8 10 7 7-1 8-8" fill="none" stroke="#d8d8d8" strokeWidth="1.400" />
      </Task>
      <span className="mx-[9px] my-3 h-4 w-1 border-x border-[#3c4548]" />
    </div>
    <div className="flex shrink-0 gap-px pl-[5px]">
      <Task title="Edge"><path d="M2 11Q3 2 12 2q10 0 10 10v2H8q1 5 6 5 4 0 7-2v4q-3 2-8 2-9 0-10-9 0-5 6-7-2 2-2 4h9q0-4-4-4-6 0-10 4z" fill="#0a78d7" /></Task>
      <Task title="应用商店">
        <path d="M2 7l20-1v16l-20-1z" fill="#fff" />
        <path d="M8 6q0-4 4-4t5 4" fill="none" stroke="#fff" strokeWidth="1.500" />
        <path d="M6 10.500l5-.5v4H6zM12 10l6-.6v4.600h-6zM6 15h5v4l-5-.5zM12 15h6v4.700l-6-.6z" fill="#01090c" />
      </Task>
      <Task title="文件资源管理器"><path d="M2 3h7l2 2h11v16H2z" fill="#f8d673" /><path d="M2 7h20" stroke="#fff0b8" /><path d="M6 21v-7h13v7h-4v-3h-5v3z" fill="#3aa0e0" /></Task>
      <Task title="广联达" running><path d="M23 2q-2 5-8 4-6-1-7 5 0 6 5 6 4 0 4-3l-3-1v-3h8q1 13-9 13-12 0-12-11Q2 2 11 1q5 2 12 1z" fill="#1a93ee" /></Task>
      <Task title="广联达云" running><path d="M23 2q-2 5-8 4-6-1-7 5 0 6 5 6 4 0 4-3l-3-1v-3h8q1 13-9 13-12 0-12-11Q2 2 11 1q5 2 12 1z" fill="#2f9bc8" /><path d="M1 9l4-1 12 12-3 3q-13 1-13-14z" fill="#e0475a" /><path d="M4 12l8 9M7 12l7 8" stroke="#f7cdd2" /></Task>
      <Task title="记事" running><rect width="24" height="24" rx="2" fill="#f0981c" /><path d="M3 4l12-1 3 16-13 2z" fill="#fffbe8" /><path d="M6 9l8-1M6 12l8-1M7 15l6-1" stroke="#998" /><path d="M11 15L20 2l2 1-8 13z" fill="#a32c10" /></Task>
      <Task title="GGJ2013" running active><rect width="24" height="24" rx="4" fill="#0a8df2" /><path d="M12 17V8q0-3 4-2M5 10q0 4 4 4h7q4 0 3-4M9 18q3 1 3-3" fill="none" stroke="#fff" strokeWidth="2" strokeLinecap="round" /></Task>
      <Task title="360浏览器" running><circle cx="12" cy="12" r="11" fill="#e4f4dc" /><circle cx="12" cy="12" r="9.500" fill="#4bb52c" /><path d="M6 13h12q0-6-6-6t-6 6q0 5 6 5 4 0 5-3" fill="none" stroke="#fff" strokeWidth="2.500" /><path d="M1 19Q8 8 23 3" fill="none" stroke="#9ed83a" strokeWidth="1.500" /></Task>
    </div>
    <div className="ml-auto flex shrink-0 items-center">
      <div className="mr-[18px] text-center leading-[17px]"><div>45%</div><div>CPU使用</div></div>
      <ChevronUp className="mr-2 size-4" strokeWidth={1.5} />
      <BatteryCharging className="mr-[9px] size-4" strokeWidth={1.5} />
      <Wifi className="mr-[7px] size-4 -rotate-45" strokeWidth={1.5} />
      <Volume2 className="mr-[8px] size-4" strokeWidth={1.5} />
      <span className="mr-[15px] font-bold">英</span>
      <Sogou className="mr-[17px] size-4" />
      <div className="w-[60px] text-center leading-[17px]"><div>17:15</div><div>2017/8/15</div></div>
      <button type="button" aria-label="4 条新通知" className="mr-[14px] ml-[21px] flex">
        <svg viewBox="0 0 25 25" className="size-[25px]">
          <path d="M1 1h16v12H8l-4 4v-4H1z" fill="#fff" />
          <path d="M3 4.500h12M3 7.500h12M3 10.500h9" stroke="#01090c" />
          <circle cx="16" cy="16" r="8" fill="#333" stroke="#777" />
          <text x="13" y="20" fontSize="11" fontFamily="Open Sans" fill="#fff">4</text>
        </svg>
      </button>
    </div>
  </div>
);

const App: React.FC = () => (
  <div className="relative flex h-screen flex-col overflow-hidden bg-[#f0f0f0] font-['Open_Sans','Noto_Sans_CJK_SC',sans-serif] text-[12px] leading-4 text-black">
    <TitleBar />
    <MenuBar />
    <MainToolbar />
    <main className="flex min-h-0 flex-1">
      <Navigator />
      <div className="flex min-w-0 flex-1 pl-[6px]">
        <MemberArea />
        <SectionEditor />
        <RightEdge />
      </div>
    </main>
    <StatusBar />
    <Taskbar />
    <div className="absolute -top-[27px] left-[937px] flex size-[46px] items-end justify-center rounded-full border-2 border-[#d0d4d0] bg-[#3cc45c] pb-[2px] text-[12px] font-bold text-white shadow-md">
      68
    </div>
  </div>
);

export default App;
